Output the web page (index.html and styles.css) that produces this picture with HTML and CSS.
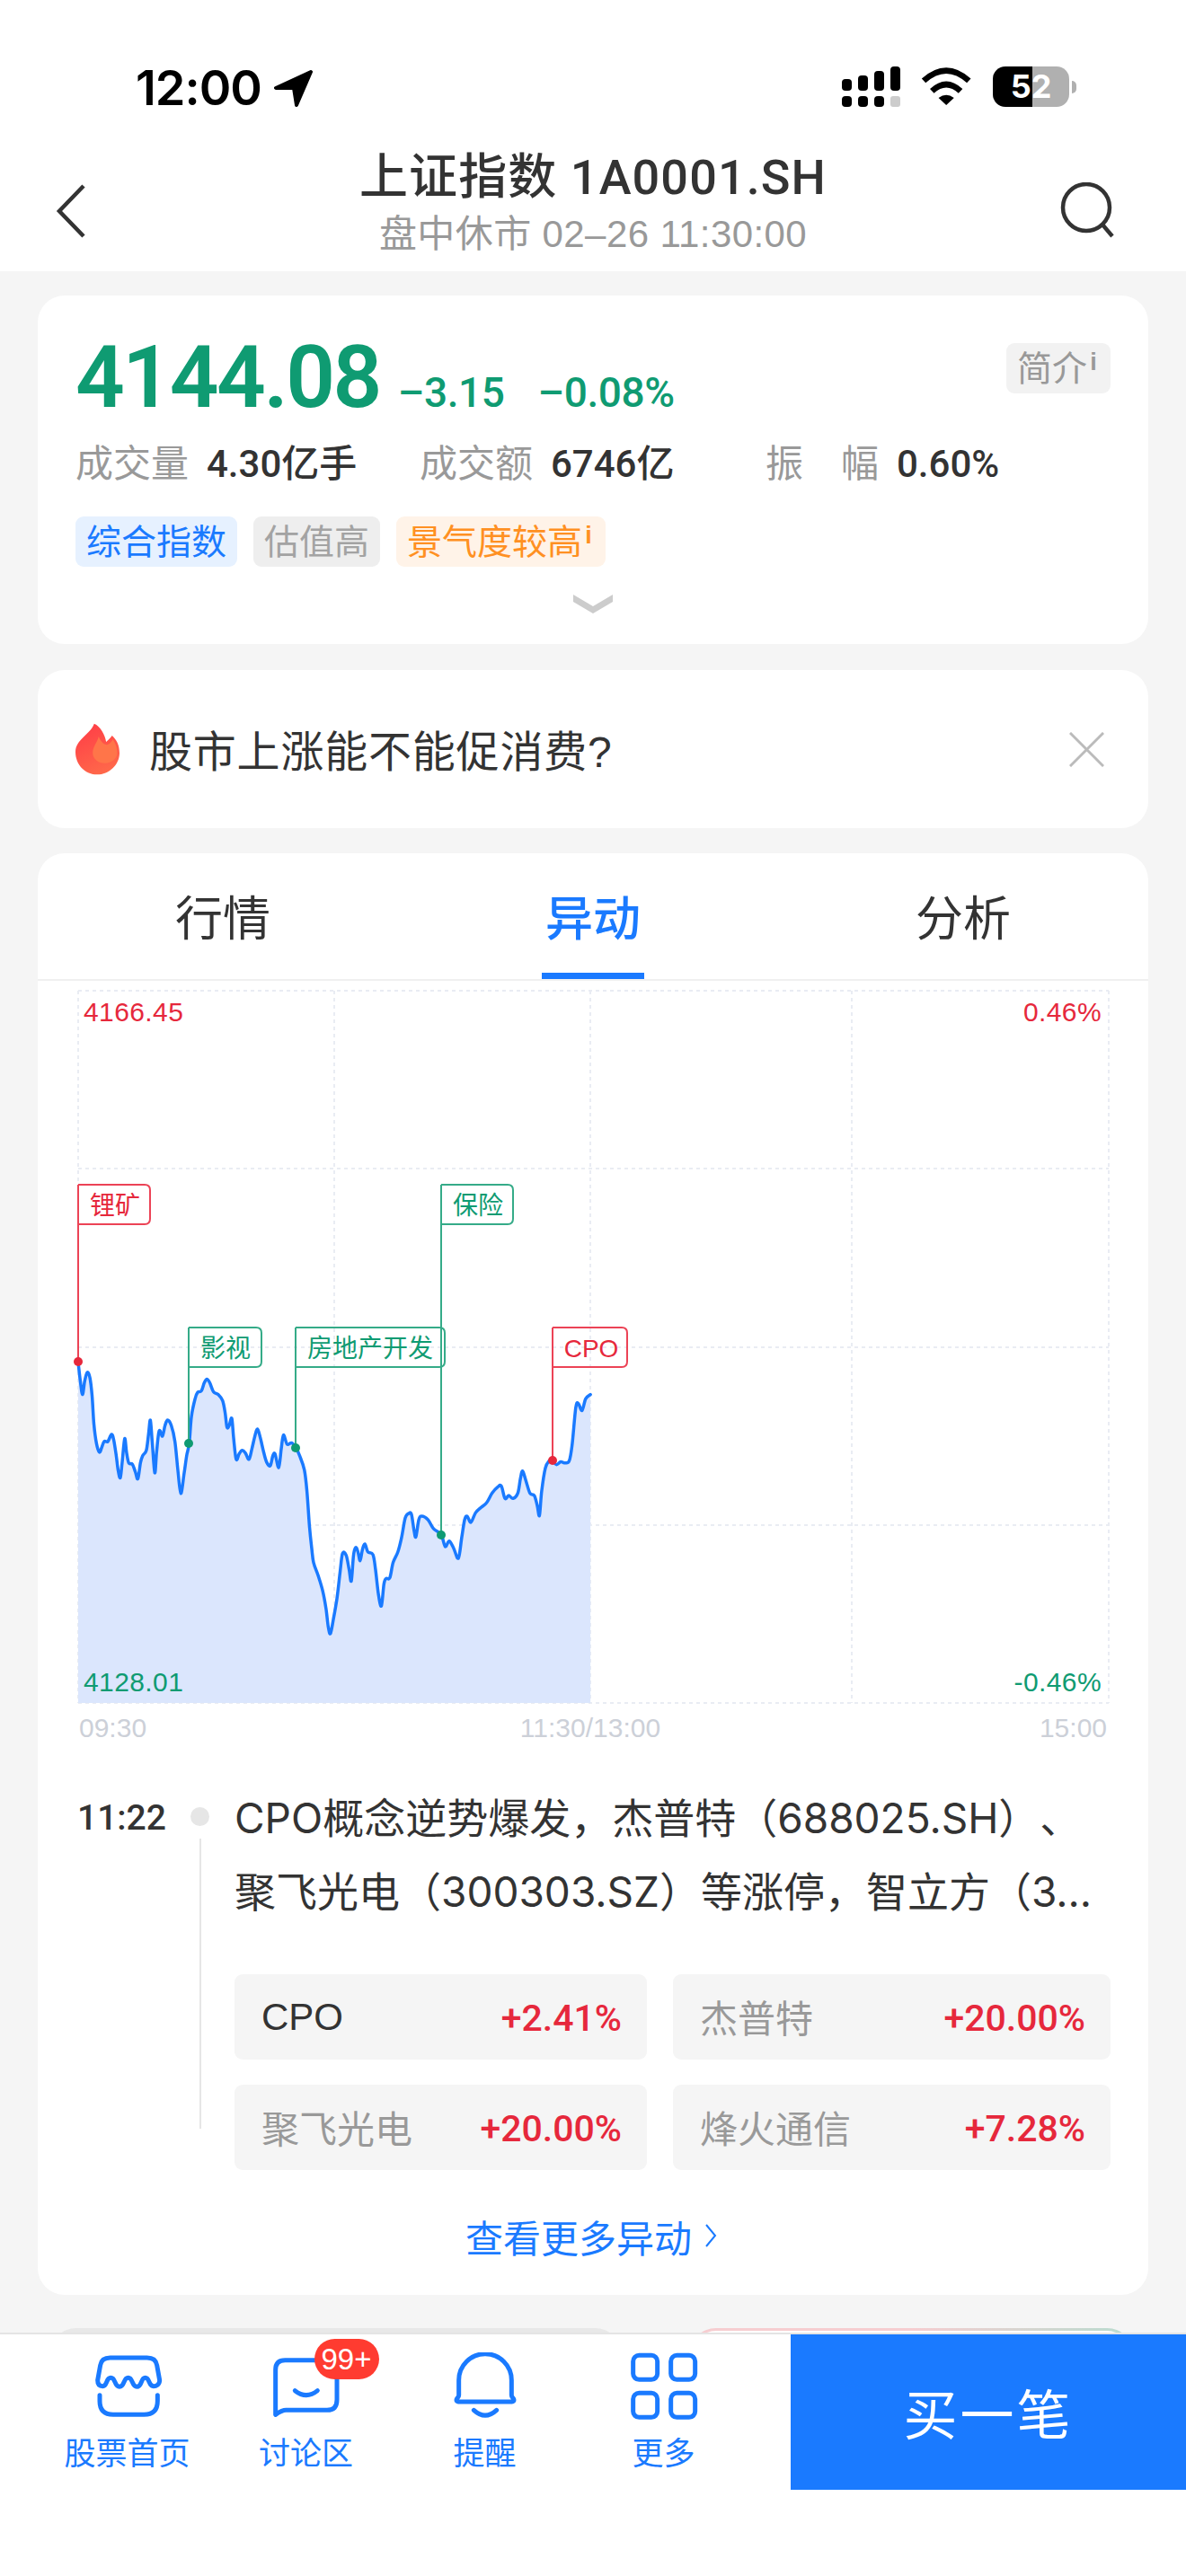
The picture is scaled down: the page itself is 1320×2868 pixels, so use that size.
FILE: index.html
```html
<!DOCTYPE html>
<html lang="zh-CN">
<head>
<meta charset="utf-8">
<title>上证指数 1A0001.SH</title>
<link rel="stylesheet" href="styles.css">
</head>
<body>
<div class="screen">
  <header class="top">
    <div class="status">
      <div class="clock"><span>12:00</span>
        <svg class="loc" viewBox="303 78 44 41"><path d="M344 80 L305 98 L325 98 L328 117 Z" fill="#000" stroke="#000" stroke-width="4" stroke-linejoin="round"/></svg>
      </div>
      <div class="status-right">
        <svg class="signal" viewBox="0 0 66 46"><g fill="#000"><rect x="0" y="14" width="11" height="13" rx="4"/><rect x="18" y="10" width="11" height="17" rx="4"/><rect x="36" y="5" width="11" height="22" rx="4"/><rect x="54" y="0" width="11" height="27" rx="4"/><rect x="0" y="33" width="11" height="12" rx="4"/><rect x="18" y="33" width="11" height="12" rx="4"/><rect x="36" y="33" width="11" height="12" rx="4"/></g><rect x="54" y="33" width="11" height="12" rx="3" fill="#ccc"/></svg>
        <svg class="wifi" viewBox="375 45 172 127"><g fill="none" stroke="#000" stroke-width="20"><path d="M384 90 Q460 22 536 90"/><path d="M412 125 Q460 80 508 125"/></g><path d="M434 148 Q460 128 486 148 L460 172 Z" fill="#000"/></svg>
        <div class="battery"><span>52</span></div>
        <div class="nub"></div>
      </div>
    </div>
    <div class="navbar">
      <svg class="back" viewBox="0 0 34 60"><path d="M31 2 L4 30 L31 58" fill="none" stroke="#333" stroke-width="4.5"/></svg>
      <div class="heading">
        <div class="title">上证指数 1A0001.SH</div>
        <div class="subtitle">盘中休市 02–26 11:30:00</div>
      </div>
      <svg class="search" viewBox="0 0 60 62"><circle cx="29" cy="28" r="26" fill="none" stroke="#333" stroke-width="4.5"/><path d="M47 47 L58 60" stroke="#333" stroke-width="4.5" fill="none"/></svg>
    </div>
  </header>

  <main class="content">
    <section class="card quote">
      <div class="price-row">
        <span class="price">4144.08</span>
        <span class="change">–3.15</span>
        <span class="change pct">–0.08%</span>
        <span class="tag tag-intro">简介<i class="sup">i</i></span>
      </div>
      <div class="stats">
        <div class="stat"><span class="stat-label">成交量</span><span class="stat-value">4.30亿手</span></div>
        <div class="stat"><span class="stat-label">成交额</span><span class="stat-value">6746亿</span></div>
        <div class="stat"><span class="stat-label spread"><span>振</span><span>幅</span></span><span class="stat-value">0.60%</span></div>
      </div>
      <div class="tags">
        <span class="tag tag-blue">综合指数</span>
        <span class="tag tag-gray">估值高</span>
        <span class="tag tag-orange">景气度较高<i class="sup">i</i></span>
      </div>
      <svg class="more" viewBox="0 0 44 21"><path d="M0 0 L22 13 L44 0 L44 8 L22 21 L0 8 Z" fill="#ccc"/></svg>
    </section>

    <section class="card topic">
      <svg class="flame" viewBox="132 197 148 171">
        <defs><linearGradient id="fl" x1="0.3" y1="0" x2="0.7" y2="1"><stop offset="0" stop-color="#ff3f47"/><stop offset="1" stop-color="#ff6a4a"/></linearGradient></defs>
        <path d="M195 197 C215 205 232 235 235 258 C243 252 250 243 255 237 C270 250 280 270 280 295 C280 335 245 368 205 368 C165 368 132 335 132 292 C132 250 180 235 195 197 Z" fill="url(#fl)"/>
        <path d="M210 240 C215 255 228 268 238 268 C248 266 254 256 258 250 C268 265 272 280 272 297 C272 315 252 330 232 330 C208 330 190 315 190 295 C190 275 205 260 210 240 Z" fill="#ff7549"/>
      </svg>
      <span class="topic-text">股市上涨能不能促消费?</span>
      <svg class="close" viewBox="0 0 40 40"><path d="M1 1 L39 39 M39 1 L1 39" stroke="#bbb" stroke-width="3" fill="none"/></svg>
    </section>

    <section class="card market">
      <nav class="tabs">
        <span class="tab">行情</span>
        <span class="tab active">异动</span>
        <span class="tab">分析</span>
      </nav>

      <svg class="chart" viewBox="42 1092 1236 889">
        <g class="grid">
          <path d="M87 1103 H1234 M87 1301 H1234 M87 1500 H1234 M87 1698 H1234 M87 1896 H1234"/>
          <path d="M87 1103 V1896 M372 1103 V1896 M657 1103 V1896 M948 1103 V1896 M1234 1103 V1896"/>
        </g>
        <g transform="translate(60 1280) scale(.40816 .3962)">
          <polygon class="area" points="66,596 72,650 78,688 84,650 91,626 98,640 104,690 109,770 116,825 124,850 130,838 137,820 147,820 157,800 163,815 170,860 175,900 181,922 186,880 193,812 198,850 204,880 214,884 222,905 229,925 236,880 242,860 252,845 258,800 263,760 268,820 275,908 280,850 287,790 296,805 303,775 310,760 320,775 330,820 338,900 346,966 355,910 362,860 369,825 375,750 385,700 392,682 402,678 410,655 417,645 425,655 435,680 448,688 460,705 467,740 472,780 478,775 485,755 490,810 497,870 505,855 513,845 522,852 532,870 540,840 548,805 555,785 563,810 572,850 580,878 590,888 597,860 603,855 613,893 620,840 626,802 636,828 648,824 660,838 670,860 683,900 690,960 697,1060 703,1120 708,1160 720,1195 733,1240 742,1290 748,1340 754,1360 762,1320 772,1260 780,1190 787,1135 797,1140 805,1180 811,1212 817,1140 823,1118 829,1130 835,1155 841,1125 848,1108 856,1130 870,1138 877,1180 885,1250 893,1282 900,1220 906,1205 916,1203 925,1160 938,1130 948,1090 958,1035 968,1022 975,1025 982,1070 987,1088 995,1040 1003,1030 1020,1040 1035,1065 1056,1082 1067,1115 1078,1100 1090,1120 1103,1148 1112,1090 1120,1040 1127,1030 1137,1047 1150,1020 1165,1005 1180,992 1195,965 1210,948 1220,945 1230,980 1240,972 1252,980 1265,965 1272,925 1278,903 1287,930 1298,965 1310,972 1318,1000 1324,1028 1330,960 1340,895 1350,875 1358,873 1370,885 1382,877 1392,880 1405,875 1413,830 1423,725 1430,713 1440,733 1450,700 1463,688 1463,1555 66,1555"/>
          <path id="price-line" class="line" data-points="66,596 72,650 78,688 84,650 91,626 98,640 104,690 109,770 116,825 124,850 130,838 137,820 147,820 157,800 163,815 170,860 175,900 181,922 186,880 193,812 198,850 204,880 214,884 222,905 229,925 236,880 242,860 252,845 258,800 263,760 268,820 275,908 280,850 287,790 296,805 303,775 310,760 320,775 330,820 338,900 346,966 355,910 362,860 369,825 375,750 385,700 392,682 402,678 410,655 417,645 425,655 435,680 448,688 460,705 467,740 472,780 478,775 485,755 490,810 497,870 505,855 513,845 522,852 532,870 540,840 548,805 555,785 563,810 572,850 580,878 590,888 597,860 603,855 613,893 620,840 626,802 636,828 648,824 660,838 670,860 683,900 690,960 697,1060 703,1120 708,1160 720,1195 733,1240 742,1290 748,1340 754,1360 762,1320 772,1260 780,1190 787,1135 797,1140 805,1180 811,1212 817,1140 823,1118 829,1130 835,1155 841,1125 848,1108 856,1130 870,1138 877,1180 885,1250 893,1282 900,1220 906,1205 916,1203 925,1160 938,1130 948,1090 958,1035 968,1022 975,1025 982,1070 987,1088 995,1040 1003,1030 1020,1040 1035,1065 1056,1082 1067,1115 1078,1100 1090,1120 1103,1148 1112,1090 1120,1040 1127,1030 1137,1047 1150,1020 1165,1005 1180,992 1195,965 1210,948 1220,945 1230,980 1240,972 1252,980 1265,965 1272,925 1278,903 1287,930 1298,965 1310,972 1318,1000 1324,1028 1330,960 1340,895 1350,875 1358,873 1370,885 1382,877 1392,880 1405,875 1413,830 1423,725 1430,713 1440,733 1450,700 1463,688"/>
        </g>
        <g class="flag up">
          <path d="M87 1319 H161 Q167 1319 167 1325 V1357 Q167 1363 161 1363 H87 M87 1319 V1516"/>
          <circle cx="87" cy="1516" r="5"/><text x="128" y="1352" text-anchor="middle">锂矿</text>
        </g>
        <g class="flag down">
          <path d="M210 1478 H285 Q291 1478 291 1484 V1516 Q291 1522 285 1522 H210 M210 1478 V1607"/>
          <circle cx="210" cy="1607" r="5"/><text x="251" y="1511" text-anchor="middle">影视</text>
        </g>
        <g class="flag down">
          <path d="M329 1478 H489 Q495 1478 495 1484 V1516 Q495 1522 489 1522 H329 M329 1478 V1612"/>
          <circle cx="329" cy="1612" r="5"/><text x="412" y="1511" text-anchor="middle">房地产开发</text>
        </g>
        <g class="flag down">
          <path d="M491 1319 H565 Q571 1319 571 1325 V1357 Q571 1363 565 1363 H491 M491 1319 V1709"/>
          <circle cx="491" cy="1709" r="5"/><text x="532" y="1352" text-anchor="middle">保险</text>
        </g>
        <g class="flag up">
          <path d="M615 1478 H692 Q698 1478 698 1484 V1516 Q698 1522 692 1522 H615 M615 1478 V1626"/>
          <circle cx="615" cy="1626" r="5"/><text x="658" y="1511" text-anchor="middle">CPO</text>
        </g>
        <g class="axis-val">
          <text class="red" x="93" y="1137">4166.45</text>
          <text class="red" x="1226" y="1137" text-anchor="end">0.46%</text>
          <text class="green" x="93" y="1883">4128.01</text>
          <text class="green" x="1226" y="1883" text-anchor="end">-0.46%</text>
        </g>
        <g class="axis-time">
          <text x="88" y="1934">09:30</text>
          <text x="657" y="1934" text-anchor="middle">11:30/13:00</text>
          <text x="1232" y="1934" text-anchor="end">15:00</text>
        </g>
      </svg>

      <div class="event">
        <div class="event-time">11:22</div>
        <div class="rail"><div class="rail-dot"></div><div class="rail-line"></div></div>
        <div class="event-body">
          <p class="event-text">CPO概念逆势爆发，杰普特（688025.SH）、</p>
          <p class="event-text">聚飞光电（300303.SZ）等涨停，智立方（3...</p>
          <div class="movers">
            <div class="mover"><span class="mover-name dark">CPO</span><span class="mover-val">+2.41%</span></div>
            <div class="mover"><span class="mover-name">杰普特</span><span class="mover-val">+20.00%</span></div>
            <div class="mover"><span class="mover-name">聚飞光电</span><span class="mover-val">+20.00%</span></div>
            <div class="mover"><span class="mover-name">烽火通信</span><span class="mover-val">+7.28%</span></div>
          </div>
        </div>
      </div>
      <div class="see-more"><span>查看更多异动</span>
        <svg class="see-arrow" viewBox="0 0 14 28"><path d="M2 2 L12 14 L2 26" fill="none" stroke="#1a7aff" stroke-width="2"/></svg>
      </div>
    </section>

    <div class="peek">
      <div class="peek-a"></div>
      <div class="peek-b"></div>
    </div>
  </main>

  <footer class="footer">
    <div class="footer-nav">
      <div class="nav-item">
        <svg class="nav-icon" viewBox="183 57 240 228"><g class="ico"><path d="M203 150 L212 100 Q216 75 245 75 H368 Q397 75 401 100 L410 150 C410 165 398 170 390 170 C372 170 378 142 362 142 C346 142 352 172 334 172 C316 172 322 142 305 142 C288 142 294 172 276 172 C258 172 264 142 247 142 C230 142 236 170 220 170 C210 170 203 165 203 150 Z"/><path d="M210 200 V220 Q210 265 255 265 H358 Q403 265 403 220 V200"/></g></svg>
        <span class="nav-label">股票首页</span>
      </div>
      <div class="nav-item">
        <div class="chat-wrap">
          <svg class="nav-icon" viewBox="783 57 240 228"><g class="ico"><path d="M800 265 V115 Q800 83 832 83 H975 Q1005 83 1005 115 V215 Q1005 250 972 250 H835 Q822 250 800 265 Z"/><path d="M865 185 Q903 215 940 185"/></g></svg>
          <span class="badge">99+</span>
        </div>
        <span class="nav-label">讨论区</span>
      </div>
      <div class="nav-item">
        <svg class="nav-icon" viewBox="90 57 240 228"><g class="ico"><path d="M122 200 V150 A88 88 0 0 1 298 150 V200 C298 208 306 210 306 216 C306 220 303 222 300 222 H120 C117 222 114 220 114 216 C114 210 122 208 122 200 Z"/><path d="M172 250 Q210 285 248 250"/></g></svg>
        <span class="nav-label">提醒</span>
      </div>
      <div class="nav-item">
        <svg class="nav-icon" viewBox="687 57 240 228"><g class="ico"><rect x="704" y="67" width="81" height="81" rx="20"/><rect x="830" y="67" width="81" height="81" rx="20"/><rect x="704" y="193" width="81" height="81" rx="20"/><rect x="830" y="193" width="81" height="81" rx="20"/></g></svg>
        <span class="nav-label">更多</span>
      </div>
    </div>
    <div class="buy">买一笔</div>
  </footer>
</div>
<script src="chart.js"></script>
</body>
</html>
```
FILE: chart.js
```js
// Smooth the intraday price series into a Catmull-Rom curve.
var line = document.getElementById('price-line');
var pts = line.getAttribute('data-points').split(' ').map(function (p) {
  return p.split(',').map(Number);
});
var d = 'M' + pts[0].join(' ');
for (var i = 0; i < pts.length - 1; i++) {
  var p0 = pts[Math.max(i - 1, 0)], p1 = pts[i], p2 = pts[i + 1], p3 = pts[Math.min(i + 2, pts.length - 1)];
  d += ' C' + (p1[0] + (p2[0] - p0[0]) / 6) + ' ' + (p1[1] + (p2[1] - p0[1]) / 6) + ' ' +
    (p2[0] - (p3[0] - p1[0]) / 6) + ' ' + (p2[1] - (p3[1] - p1[1]) / 6) + ' ' + p2[0] + ' ' + p2[1];
}
line.setAttribute('d', d);
```
FILE: styles.css
```css
* { box-sizing: border-box; }
html, body { margin: 0; padding: 0; }
body {
  font-family: "Liberation Sans", "Noto Sans CJK SC", sans-serif;
  color: #333;
  background: #fff;
  text-spacing-trim: space-all;
}
.screen {
  width: 1320px;
  height: 2868px;
  display: flex;
  flex-direction: column;
  overflow: hidden;
  background: #f5f5f5;
}

/* top */
.top { height: 302px; background: #fff; flex: none; }
.status {
  height: 160px;
  padding: 75px 122px 0 151px;
  display: flex;
  justify-content: space-between;
}
.clock {
  display: flex;
  align-items: flex-start;
  gap: 14px;
  font: 600 54px/46px Inter, "Liberation Sans", sans-serif;
  color: #000;
  letter-spacing: -1px;
}
.loc { width: 44px; height: 41px; margin-top: 3px; }
.status-right { display: flex; align-items: flex-start; margin-top: -1px; }
.signal { width: 66px; height: 46px; }
.wifi { width: 57px; height: 42px; margin: 1px 0 0 22px; }
.battery {
  width: 85px;
  height: 45px;
  margin-left: 23px;
  border-radius: 14px;
  background: linear-gradient(90deg, #000 52%, #b0b0b0 52%);
  color: #fff;
  text-align: center;
  font: 700 36px/45px Inter, "Liberation Sans", sans-serif;
}
.nub {
  width: 5px;
  height: 14px;
  margin: 16px 0 0 3px;
  background: #b0b0b0;
  border-radius: 0 5px 5px 0;
}
.navbar {
  height: 142px;
  display: grid;
  grid-template-columns: 1fr auto 1fr;
  align-items: start;
  padding: 0 62px;
}
.back { width: 34px; height: 60px; margin-top: 45px; }
.search { width: 60px; height: 62px; margin: 43px 18px 0 0; justify-self: end; }
.heading { text-align: center; margin-top: 8px; }
.title {
  font: 500 54px/60px Roboto, "Noto Sans CJK SC", sans-serif;
  letter-spacing: 1.1px;
  color: #333;
}
.subtitle {
  font-size: 42px;
  line-height: 50px;
  letter-spacing: .4px;
  color: #999;
  margin-top: 8px;
}

/* main */
.content { flex: 1; min-height: 0; overflow: hidden; padding: 27px 42px 0; }
.card { background: #fff; border-radius: 30px; }

.quote { height: 388px; padding: 53px 42px 0; margin-bottom: 29px; }
.price-row { display: flex; align-items: baseline; height: 76px; }
.price {
  font: 600 96px/76px Roboto, sans-serif;
  letter-spacing: -2.5px;
  color: #0f9b72;
}
.change {
  font: 500 46px/76px Roboto, sans-serif;
  letter-spacing: -.4px;
  color: #0f9b72;
  margin-left: 20px;
}
.pct { margin-left: 37px; }
.tag {
  height: 56px;
  padding: 2px 12px 0;
  border-radius: 9px;
  display: inline-flex;
  align-items: center;
  font-size: 39px;
  line-height: 54px;
}
.tag-intro {
  margin-left: auto;
  align-self: flex-start;
  background: #f2f2f2;
  color: #999;
}
.sup {
  font: 700 27px/27px "Liberation Sans", sans-serif;
  width: 14px;
  align-self: flex-start;
  margin-top: 6px;
  text-align: center;
}
.stats {
  display: grid;
  grid-template-columns: 383px 385px 1fr;
  margin-top: 31px;
  height: 56px;
  align-items: center;
}
.stat { display: flex; gap: 20px; align-items: center; }
.stat-label { font-size: 42px; line-height: 56px; color: #999; width: 126px; }
.spread { display: flex; justify-content: space-between; }
.stat-value { font: 500 42px/56px Roboto, "Noto Sans CJK SC", sans-serif; color: #333; }
.tags { display: flex; gap: 18px; margin-top: 30px; }
.tag-blue { background: #e6f1ff; color: #1a7aff; }
.tag-gray { background: #eee; color: #a3a3a3; }
.tag-orange { background: #fff3e8; color: #ff9022; }
.more { display: block; width: 44px; height: 21px; margin: 31px auto 0; }

.topic {
  height: 176px;
  margin-bottom: 28px;
  display: flex;
  align-items: center;
  padding: 0 49px 0 42px;
}
.flame { width: 49px; height: 58px; flex: none; }
.topic-text { font-size: 48px; color: #333; margin: -2px 0 0 33px; letter-spacing: .8px; }
.close { width: 39px; height: 39px; margin-left: auto; }

.market { height: 1605px; }
.tabs { height: 142px; display: grid; grid-template-columns: 1fr 1fr 1fr; border-bottom: 2px solid #f0f0f0; }
.tab {
  position: relative;
  display: flex;
  align-items: center;
  justify-content: center;
  padding-bottom: 2px;
  font-size: 53px;
  color: #333;
}
.tab.active { color: #1a7aff; font-weight: 500; }
.tab.active::after {
  content: "";
  position: absolute;
  left: 50%;
  bottom: 0;
  width: 114px;
  height: 7px;
  margin-left: -57px;
  background: #1a7aff;
}
.chart { display: block; width: 1236px; height: 889px; }
.grid path { fill: none; stroke: #e9ecf3; stroke-width: 2; stroke-dasharray: 4 4; }
.area { fill: #dbe6fd; stroke: none; }
.line {
  fill: none;
  stroke: #1a7aff;
  stroke-width: 3.5;
  stroke-linejoin: round;
  stroke-linecap: round;
  vector-effect: non-scaling-stroke;
}
.flag path { fill: #fff; stroke-width: 2; }
.flag text { font-size: 28px; stroke: none; }
.flag.up path { stroke: #ec4356; fill: none; }
.flag.up circle, .flag.up text { fill: #e6283c; }
.flag.down path { stroke: #35ab88; fill: none; }
.flag.down circle, .flag.down text { fill: #0f9b72; }
.axis-val text { font-size: 30px; letter-spacing: .4px; }
.axis-val .red { fill: #e6283c; }
.axis-val .green { fill: #0f9b72; }
.axis-time text { font-size: 30px; fill: #ccd0d8; }

.event { display: flex; padding-left: 42px; }
.event-time {
  width: 128px;
  font: 500 39px/82px Roboto, sans-serif;
  padding: 2px 0 0 2px;
  flex: none;
}
.rail { width: 21px; flex: none; display: flex; flex-direction: column; align-items: center; padding-top: 31px; }
.rail-dot { width: 21px; height: 21px; border-radius: 50%; background: #e6e6e6; }
.rail-line { width: 2px; height: 323px; margin-top: 14px; background: #e6e6e6; }
.event-body { width: 975px; margin-left: 28px; padding-top: 2px; flex: none; }
.event-text {
  margin: 0;
  font: 400 46px/82px Inter, "Noto Sans CJK SC", sans-serif;
  white-space: nowrap;
  color: #333;
}
.movers {
  display: grid;
  grid-template-columns: 459fr 487fr;
  gap: 28px 29px;
  margin-top: 51px;
}
.mover {
  height: 95px;
  background: #f5f5f5;
  border-radius: 9px;
  padding: 0 28px 0 30px;
  display: flex;
  align-items: center;
  justify-content: space-between;
}
.mover-name { font-size: 42px; color: #999; padding-bottom: 3px; }
.mover-name.dark { color: #333; padding-bottom: 0; }
.mover-val { font: 500 41px/1 Roboto, sans-serif; color: #e6283c; padding-top: 4px; }
.see-more {
  display: flex;
  justify-content: center;
  align-items: center;
  gap: 14px;
  height: 60px;
  font-size: 42px;
  color: #1a7aff;
  margin-top: 43px;
  padding-right: 4px;
}
.see-arrow { width: 14px; height: 28px; }

.peek { display: flex; margin-top: 37px; padding-left: 13px; }
.peek-a { width: 637px; height: 40px; background: #e8e8e8; border-radius: 30px 30px 0 0; }
.peek-b {
  width: 495px;
  height: 40px;
  margin-left: 75px;
  border: 3px solid transparent;
  background: linear-gradient(#fff, #fff) padding-box, linear-gradient(90deg, #f6cdd0 50%, #b8dccf) border-box;
  border-radius: 30px 30px 0 0;
}

/* footer */
.footer {
  flex: none;
  height: 271px;
  background: #fff;
  border-top: 2px solid #e4e4e4;
  display: flex;
  align-items: flex-start;
}
.footer-nav {
  width: 880px;
  padding: 0 42px;
  display: grid;
  grid-template-columns: repeat(4, 199px);
}
.nav-item { display: flex; flex-direction: column; align-items: center; padding-top: 20px; }
.chat-wrap { position: relative; }
.nav-icon { display: block; width: 80px; height: 76px; }
.ico { fill: none; stroke: #1a7aff; stroke-width: 15; stroke-linecap: round; stroke-linejoin: round; }
.badge {
  position: absolute;
  left: 49px;
  top: -15px;
  width: 72px;
  height: 45px;
  border-radius: 23px;
  background: #ff3b30;
  color: #fff;
  font-size: 33px;
  line-height: 45px;
  text-align: center;
}
.nav-label { font-size: 35px; line-height: 44px; color: #1a7aff; margin-top: 15px; }
.buy {
  width: 440px;
  height: 173px;
  padding-bottom: 3px;
  background: #1a7aff;
  color: #fff;
  font-size: 60px;
  display: flex;
  align-items: center;
  justify-content: center;
  letter-spacing: 3px;
}
```
